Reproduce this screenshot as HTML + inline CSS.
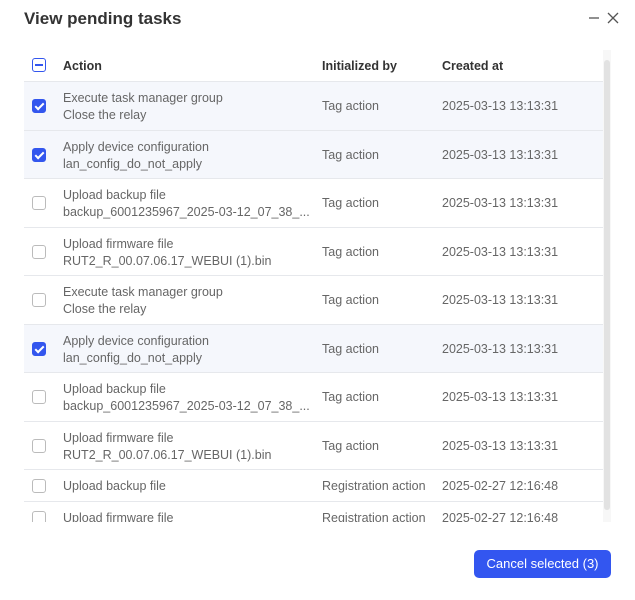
<!DOCTYPE html>
<html><head><style>
*{box-sizing:border-box;margin:0;padding:0}
body{width:635px;height:600px;background:#fff;font-family:"Liberation Sans",sans-serif;position:relative;overflow:hidden;color:#666}
.title{position:absolute;left:24px;top:9px;font-size:17px;font-weight:bold;color:#333}
.icons{position:absolute;top:11px;left:588px}
.wrap{position:absolute;left:24px;top:50px;width:579px;height:472px;overflow:hidden}
.row{position:relative;border-bottom:1px solid #e6e8ec;font-size:12.5px}
.row.sel{background:#f5f7fc}
.row .c1{position:absolute;left:39px}
.row .c2{position:absolute;left:298px}
.row .c3{position:absolute;left:418px}
.cb{position:absolute;left:8px;width:14px;height:14px;border:1px solid #bbb;border-radius:3px;background:#fff}
.cb.on{background:#3356ee;border-color:#3356ee}
.cb.on::after{content:"";position:absolute;left:4px;top:1px;width:3px;height:7px;border:solid #fff;border-width:0 2px 2px 0;transform:rotate(45deg)}
.cb.ind{border-color:#3356ee}
.cb.ind::after{content:"";position:absolute;left:2px;top:5px;width:8px;height:2px;background:#3356ee}
.hd{height:32px;color:#333;font-weight:bold}
.hd span{top:9px}
.hd .cb{top:8px}
.r2{height:48.5px}
.r2 .l1{top:9px}.r2 .l2{top:26px}.r2 .mid{top:17px}
.r2 .cb{top:17px}
.r1{height:32px}
.r1 .mid{top:9px}.r1 .cb{top:9px}
.sb{position:absolute;left:603px;top:50px;width:8px;height:472px;background:#f7f7f7}
.sb div{position:absolute;left:1px;top:10px;width:6px;height:450px;background:#e2e2e2;border-radius:3px}
.btn{position:absolute;left:474px;top:550px;width:137px;height:28px;background:#3356f0;border-radius:5px;color:#fff;font-size:13px;text-align:center;line-height:28px}
</style></head><body>
<div class="title">View pending tasks</div>
<svg class="icons" width="40" height="14" viewBox="0 0 40 14"><path d="M1 7H11" stroke="#555" stroke-width="1.3"/><path d="M20 2L30 12M30 2L20 12" stroke="#555" stroke-width="1.3"/></svg>
<div class="wrap">
<div class="row hd"><div class="cb ind"></div><span class="c1">Action</span><span class="c2">Initialized by</span><span class="c3">Created at</span></div>
<div class="row r2 sel"><div class="cb on"></div><span class="c1 l1">Execute task manager group</span><span class="c1 l2">Close the relay</span><span class="c2 mid">Tag action</span><span class="c3 mid">2025-03-13 13:13:31</span></div>
<div class="row r2 sel"><div class="cb on"></div><span class="c1 l1">Apply device configuration</span><span class="c1 l2">lan_config_do_not_apply</span><span class="c2 mid">Tag action</span><span class="c3 mid">2025-03-13 13:13:31</span></div>
<div class="row r2"><div class="cb"></div><span class="c1 l1">Upload backup file</span><span class="c1 l2">backup_6001235967_2025-03-12_07_38_...</span><span class="c2 mid">Tag action</span><span class="c3 mid">2025-03-13 13:13:31</span></div>
<div class="row r2"><div class="cb"></div><span class="c1 l1">Upload firmware file</span><span class="c1 l2">RUT2_R_00.07.06.17_WEBUI (1).bin</span><span class="c2 mid">Tag action</span><span class="c3 mid">2025-03-13 13:13:31</span></div>
<div class="row r2"><div class="cb"></div><span class="c1 l1">Execute task manager group</span><span class="c1 l2">Close the relay</span><span class="c2 mid">Tag action</span><span class="c3 mid">2025-03-13 13:13:31</span></div>
<div class="row r2 sel"><div class="cb on"></div><span class="c1 l1">Apply device configuration</span><span class="c1 l2">lan_config_do_not_apply</span><span class="c2 mid">Tag action</span><span class="c3 mid">2025-03-13 13:13:31</span></div>
<div class="row r2"><div class="cb"></div><span class="c1 l1">Upload backup file</span><span class="c1 l2">backup_6001235967_2025-03-12_07_38_...</span><span class="c2 mid">Tag action</span><span class="c3 mid">2025-03-13 13:13:31</span></div>
<div class="row r2"><div class="cb"></div><span class="c1 l1">Upload firmware file</span><span class="c1 l2">RUT2_R_00.07.06.17_WEBUI (1).bin</span><span class="c2 mid">Tag action</span><span class="c3 mid">2025-03-13 13:13:31</span></div>
<div class="row r1"><div class="cb"></div><span class="c1 mid">Upload backup file</span><span class="c2 mid">Registration action</span><span class="c3 mid">2025-02-27 12:16:48</span></div>
<div class="row r1"><div class="cb"></div><span class="c1 mid">Upload firmware file</span><span class="c2 mid">Registration action</span><span class="c3 mid">2025-02-27 12:16:48</span></div>
</div>
<div class="sb"><div></div></div>
<div class="btn">Cancel selected (3)</div>
</body></html>
